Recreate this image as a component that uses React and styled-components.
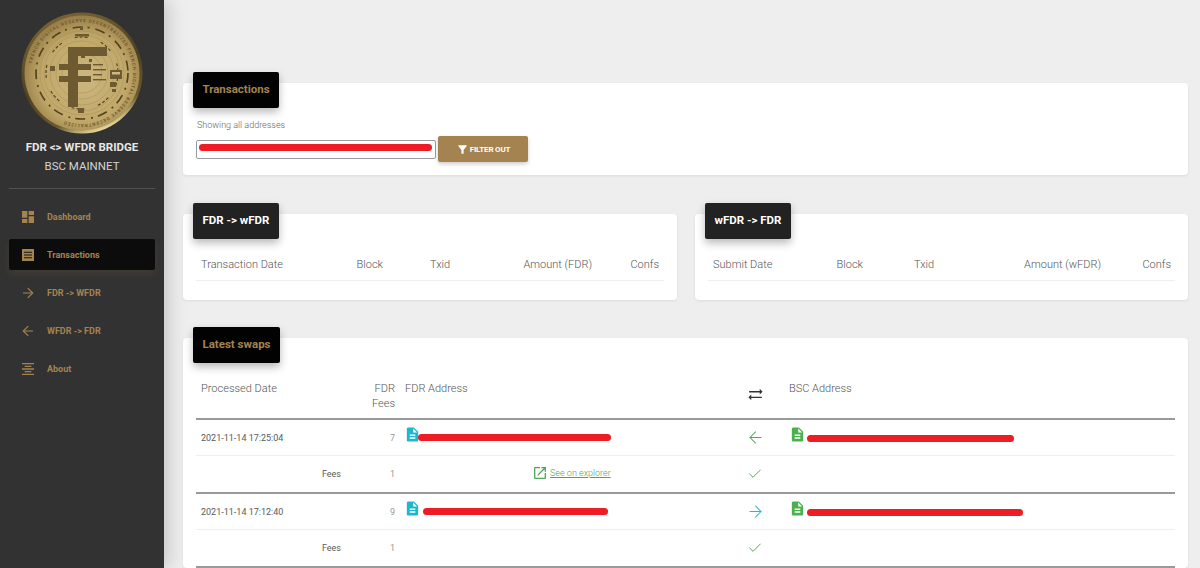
import React from "react";
import styled, { createGlobalStyle } from "styled-components";
import { MdDashboard, MdFormatAlignCenter, MdDescription, MdSyncAlt, MdOpenInNew, MdFilterAlt } from "react-icons/md";
import { ArrowLeft, ArrowRight, Check } from "lucide-react";

const GOLD = "#a58350";

const GlobalStyle = createGlobalStyle`
  html, body {
    margin: 0;
    height: 100%;
    overflow: hidden;
    background: #eeeeee;
    font-family: Roboto, "Liberation Sans", sans-serif;
  }
  #root { height: 100%; }
`;

const Page = styled.div`
  display: flex;
  height: 568px;
  overflow: hidden;
`;

const Sidebar = styled.aside`
  width: 164px;
  flex: none;
  background: #323232;
  box-shadow: 4px 0 18px rgba(0, 0, 0, 0.18);
  display: flex;
  flex-direction: column;
  align-items: center;
  padding-top: 12px;
  box-sizing: border-box;
`;

const Brand = styled.div`
  font-size: 11.5px;
  font-weight: ${p => (p.$strong ? 700 : 400)};
  color: ${p => (p.$strong ? "#e6e6e6" : "#d2d2d2")};
  line-height: 14px;
  margin-top: ${p => p.$top}px;
  white-space: nowrap;
`;

const Divider = styled.div`
  width: 146px;
  height: 1px;
  background: rgba(255, 255, 255, 0.16);
  margin: 15px 0 12px;
`;

const Nav = styled.nav`
  width: 146px;
  display: flex;
  flex-direction: column;
  gap: 7px;
`;

const NavItem = styled.div`
  height: 31px;
  display: flex;
  align-items: center;
  gap: 12px;
  padding-left: 12px;
  border-radius: 2px;
  font-size: 9px;
  font-weight: 700;
  color: ${GOLD};
  background: ${p => (p.$active ? "#0c0c0c" : "transparent")};
  box-shadow: ${p => (p.$active ? "0 4px 8px rgba(165,131,80,0.14)" : "none")};
`;

const NavIcon = styled.span`
  width: 14px;
  height: 14px;
  flex: none;
  display: flex;
  align-items: center;
  justify-content: center;
  svg { flex: none; }
`;

const Main = styled.main`
  flex: 1;
  min-width: 0;
  padding: 83px 12px 0 19px;
  display: flex;
  flex-direction: column;
  gap: 38px;
`;

const Split = styled.div`
  display: grid;
  flex: none;
  grid-template-columns: 494px 493px;
  gap: 18px;
  margin-top: 1px;
`;

const Card = styled.section`
  flex: none;
  background: #ffffff;
  border-radius: 4px;
  box-shadow: 0 1px 3px rgba(0, 0, 0, 0.08);
  padding: 0 13px;
  height: ${p => (p.$height ? `${p.$height}px` : "auto")};
  box-sizing: border-box;
`;

const Tag = styled.h2`
  display: flex;
  align-items: center;
  justify-content: center;
  box-sizing: border-box;
  width: ${p => p.$width || 86}px;
  height: 36px;
  margin: -11px 0 0 -3px;
  padding-bottom: 3px;
  border-radius: 2px;
  background: ${p => (p.$dark ? "#222222" : "#020202")};
  color: ${p => (p.$dark ? "#ffffff" : GOLD)};
  font-size: 11.5px;
  font-weight: 700;
  box-shadow: 0 4px 9px rgba(0, 0, 0, 0.28);
  position: relative;
`;

const Showing = styled.div`
  font-size: 9px;
  font-weight: 300;
  color: #666666;
  margin: 11px 0 0 1px;
  line-height: 12px;
`;

const FilterRow = styled.div`
  display: flex;
  align-items: center;
  gap: 2px;
  margin-top: 5px;
`;

const AddressBox = styled.div`
  width: 240px;
  height: 19px;
  box-sizing: border-box;
  border: 1px solid #9a9aa2;
  border-radius: 2px;
  display: flex;
  align-items: flex-start;
  padding: 3px 0 0 2px;
`;

const Scribble = styled.span`
  display: block;
  flex: none;
  width: ${p => p.$width}px;
  height: 7px;
  margin: ${p => p.$margin || 0};
  border-radius: 4px;
  background: #ee1c25;
`;

const FilterButton = styled.button`
  width: 90px;
  height: 26px;
  border: 0;
  border-radius: 2px;
  background: ${GOLD};
  color: #ffffff;
  font: 700 8px Roboto, sans-serif;
  letter-spacing: -0.2px;
  display: flex;
  align-items: center;
  justify-content: center;
  gap: 1px;
  box-shadow: 0 2px 4px rgba(0, 0, 0, 0.2);
  padding: 0;
`;

const HeadRow = styled.div`
  display: grid;
  grid-template-columns: ${p => p.$columns};
  align-items: center;
  height: 32px;
  margin-top: 9px;
  border-bottom: 1px solid #efefef;
`;

const HeadCell = styled.div`
  font-size: 11px;
  font-weight: 300;
  color: #555555;
  padding: 0 5px 0 ${p => p.$indent || 5}px;
  text-align: ${p => (p.$right ? "right" : "left")};
  white-space: nowrap;
`;

const SWAP_COLUMNS = "150px 54px 335px 40px 1fr";

const SwapHead = styled.div`
  display: grid;
  grid-template-columns: ${SWAP_COLUMNS};
  height: 37px;
  padding-top: 18px;
  border-bottom: 2px solid #999999;
`;

const SwapHeadCell = styled(HeadCell)`
  line-height: 15px;
  white-space: normal;
`;

const SwapRow = styled.div`
  display: grid;
  grid-template-columns: ${SWAP_COLUMNS};
  align-items: center;
  height: ${p => (p.$last ? 36 : 35)}px;
  border-bottom: ${p => (p.$last ? "2px solid #999999" : "1px solid #efefef")};
`;

const Cell = styled.div`
  font-size: 9px;
  color: ${p => (p.$faint ? "#999999" : "#5a5a5a")};
  padding: 0 5px;
  text-align: ${p => (p.$right ? "right" : "left")};
  white-space: nowrap;
`;

const AddressCell = styled.div`
  display: flex;
  align-items: flex-start;
  padding-left: ${p => p.$indent || 5}px;
  height: 100%;
  padding-top: 6px;
  box-sizing: border-box;
  color: ${p => p.$color};
`;

const IconCell = styled.div`
  display: flex;
  justify-content: center;
  align-self: ${p => (p.$top ? "start" : "center")};
  padding-top: ${p => p.$top || 0}px;
  color: ${p => p.$color};
`;

const ExplorerLink = styled.a`
  display: inline-flex;
  align-items: center;
  gap: 2px;
  margin-left: 127px;
  font-size: 9px;
  font-weight: 300;
  color: #4fa653;
  text-decoration: underline;
`;

const FileIcon = styled(MdDescription)`
  flex: none;
  margin-left: -1px;
`;

const TransactionsIcon = () => (
  <svg width="14" height="14" viewBox="0 0 14 14">
    <rect x="1" y="1" width="12" height="12" fill="currentColor" />
    <path d="M3 4.2h8M3 7h8M3 9.8h8" stroke="#141414" strokeWidth="1.1" />
  </svg>
);

const Coin = () => (
  <svg width="122" height="122" viewBox="0 0 122 122">
    <defs>
      <radialGradient id="coinFace" cx="52%" cy="55%" r="58%">
        <stop offset="0%" stopColor="#cdb880" />
        <stop offset="65%" stopColor="#c0a769" />
        <stop offset="100%" stopColor="#8f7540" />
      </radialGradient>
      <linearGradient id="coinRim" x1="0.2" y1="0" x2="0.6" y2="1">
        <stop offset="0%" stopColor="#7a6636" />
        <stop offset="55%" stopColor="#4e4122" />
        <stop offset="85%" stopColor="#6d5a2e" />
        <stop offset="100%" stopColor="#eadb9c" />
      </linearGradient>
      <path id="coinText" d="M 61 61 m -51 0 a 51 51 0 1 1 102 0 a 51 51 0 1 1 -102 0" />
    </defs>
    <circle cx="61" cy="61" r="60.5" fill="url(#coinRim)" />
    <circle cx="61" cy="61" r="57.5" fill="url(#coinFace)" />
    {[20, 26, 32, 38, 42].map(r => (
      <circle key={r} cx="61" cy="61" r={r} fill="none" stroke="#a88f55" strokeWidth="0.5" />
    ))}
    <text fontSize="4.5" fontFamily="Roboto, sans-serif" fontWeight="700" fill="#6e5b30" letterSpacing="0.9">
      <textPath href="#coinText" startOffset="3%">
        FRENCH DIGITAL RESERVE DECENTRALIZED FRENCH DIGITAL RESERVE DECENTRALIZED
      </textPath>
    </text>
    <g fill="none" stroke="#54451f">
      <circle cx="61" cy="61" r="46" strokeWidth="1.7" strokeDasharray="10 5 2 6" />
      <circle cx="61" cy="61" r="36" strokeWidth="1.2" strokeDasharray="3 2 3 2 3 14" />
    </g>
    <g fill="#6d5a30">
      <rect x="47" y="35" width="10" height="60" />
      <rect x="47" y="35" width="39" height="9" />
      <rect x="38" y="52" width="32" height="6" />
      <rect x="38" y="64" width="32" height="6" />
      <rect x="89" y="58" width="12" height="9" />
      <rect x="72" y="52" width="10" height="1.4" />
      <rect x="72" y="57" width="13" height="1.4" />
      <rect x="72" y="62" width="9" height="1.4" />
      <rect x="72" y="67" width="13" height="1.4" />
      <rect x="54" y="22" width="14" height="2.5" />
      <rect x="59" y="15" width="3" height="3" />
      <rect x="60" y="42" width="4" height="4" />
      <rect x="68" y="47" width="3" height="3" />
      <rect x="29" y="54" width="5" height="5" />
      <rect x="89" y="70" width="6" height="5" />
      <rect x="91" y="77" width="4" height="3" />
      <rect x="57" y="96" width="6" height="5" />
    </g>
    <rect x="91" y="60" width="8" height="2.5" fill="#cdb880" />
  </svg>
);

const App = () => (
  <Page>
    <GlobalStyle />
    <Sidebar>
      <Coin />
      <Brand $strong $top={6}>FDR &lt;&gt; WFDR BRIDGE</Brand>
      <Brand $top={5}>BSC MAINNET</Brand>
      <Divider />
      <Nav>
        <NavItem><NavIcon><MdDashboard size={16} /></NavIcon>Dashboard</NavItem>
        <NavItem $active><NavIcon><TransactionsIcon /></NavIcon>Transactions</NavItem>
        <NavItem><NavIcon><ArrowRight size={16} strokeWidth={1.6} /></NavIcon>FDR -&gt; WFDR</NavItem>
        <NavItem><NavIcon><ArrowLeft size={16} strokeWidth={1.6} /></NavIcon>WFDR -&gt; FDR</NavItem>
        <NavItem><NavIcon><MdFormatAlignCenter size={16} /></NavIcon>About</NavItem>
      </Nav>
    </Sidebar>
    <Main>
      <Card $height={92}>
        <Tag>Transactions</Tag>
        <Showing>Showing all addresses</Showing>
        <FilterRow>
          <AddressBox><Scribble $width={233} /></AddressBox>
          <FilterButton><MdFilterAlt size={13} />FILTER OUT</FilterButton>
        </FilterRow>
      </Card>
      <Split>
        <Card $height={86}>
          <Tag $dark>FDR -&gt; wFDR</Tag>
          <HeadRow $columns="144px 48px 122px 87px 67px">
            <HeadCell>Transaction Date</HeadCell>
            <HeadCell $right>Block</HeadCell>
            <HeadCell $indent={42}>Txid</HeadCell>
            <HeadCell $right>Amount (FDR)</HeadCell>
            <HeadCell $right>Confs</HeadCell>
          </HeadRow>
        </Card>
        <Card $height={86}>
          <Tag $dark>wFDR -&gt; FDR</Tag>
          <HeadRow $columns="112px 48px 132px 106px 70px">
            <HeadCell>Submit Date</HeadCell>
            <HeadCell $right>Block</HeadCell>
            <HeadCell $indent={46}>Txid</HeadCell>
            <HeadCell $right>Amount (wFDR)</HeadCell>
            <HeadCell $right>Confs</HeadCell>
          </HeadRow>
        </Card>
      </Split>
      <Card>
        <Tag $width={87}>Latest swaps</Tag>
        <SwapHead>
          <SwapHeadCell>Processed Date</SwapHeadCell>
          <SwapHeadCell $right>FDR Fees</SwapHeadCell>
          <SwapHeadCell>FDR Address</SwapHeadCell>
          <IconCell $color="#333333" $top={5}><MdSyncAlt size={17} /></IconCell>
          <SwapHeadCell $indent={14}>BSC Address</SwapHeadCell>
        </SwapHead>
        <SwapRow>
          <Cell>2021-11-14 17:25:04</Cell>
          <Cell $right $faint>7</Cell>
          <AddressCell $color="#1fb6cf">
            <FileIcon size={17} />
            <Scribble $width={193} $margin="8px 0 0 -3px" />
          </AddressCell>
          <IconCell $color="#58a65c"><ArrowLeft size={19} strokeWidth={1.3} /></IconCell>
          <AddressCell $color="#4caf50" $indent={15}>
            <FileIcon size={17} />
            <Scribble $width={207} $margin="9px 0 0 1px" />
          </AddressCell>
        </SwapRow>
        <SwapRow $last>
          <Cell $right>Fees</Cell>
          <Cell $right $faint>1</Cell>
          <Cell>
            <ExplorerLink><MdOpenInNew size={16} />See on explorer</ExplorerLink>
          </Cell>
          <IconCell $color="#58a65c"><Check size={16} strokeWidth={1.5} /></IconCell>
          <Cell />
        </SwapRow>
        <SwapRow>
          <Cell>2021-11-14 17:12:40</Cell>
          <Cell $right $faint>9</Cell>
          <AddressCell $color="#1fb6cf">
            <FileIcon size={17} />
            <Scribble $width={185} $margin="8px 0 0 2px" />
          </AddressCell>
          <IconCell $color="#29b6d8"><ArrowRight size={19} strokeWidth={1.3} /></IconCell>
          <AddressCell $color="#4caf50" $indent={15}>
            <FileIcon size={17} />
            <Scribble $width={216} $margin="9px 0 0 1px" />
          </AddressCell>
        </SwapRow>
        <SwapRow $last>
          <Cell $right>Fees</Cell>
          <Cell $right $faint>1</Cell>
          <Cell />
          <IconCell $color="#58a65c"><Check size={16} strokeWidth={1.5} /></IconCell>
          <Cell />
        </SwapRow>
      </Card>
    </Main>
  </Page>
);

export default App;
